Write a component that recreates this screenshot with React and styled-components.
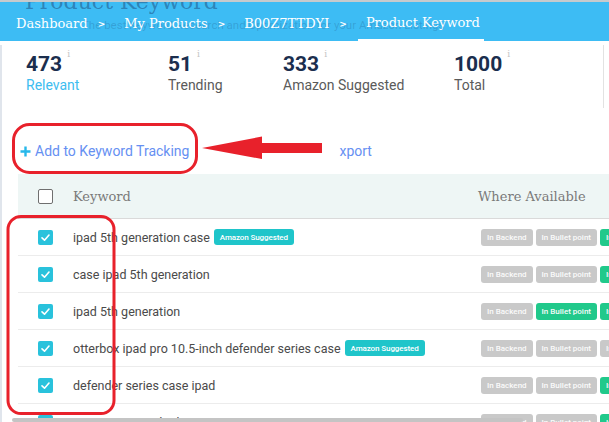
import React from 'react';
import styled, { createGlobalStyle } from 'styled-components';

const Global = createGlobalStyle`
  html, body { margin: 0; padding: 0; background: #fff; overflow: hidden; }
  body { font-family: Roboto, "Noto Sans", Arial, sans-serif; }
`;

const Page = styled.div`
  position: relative;
  width: 609px;
  height: 422px;
  overflow: hidden;
  background: #fff;
`;

const Nav = styled.nav`
  position: relative;
  box-sizing: border-box;
  height: 41px;
  border-top: 2px solid #c6cacd;
  background: #3dbcf4;
  display: flex;
  align-items: stretch;
  padding-left: 16px;
  overflow: hidden;
`;

const GhostTitle = styled.div`
  position: absolute;
  left: 25px;
  top: -11px;
  font-family: "DejaVu Serif", serif;
  font-size: 22px;
  line-height: 22px;
  color: rgba(25, 60, 110, 0.45);
  white-space: nowrap;
  pointer-events: none;
`;

const GhostSub = styled.div`
  position: absolute;
  left: 82px;
  top: 16px;
  font-family: Roboto, sans-serif;
  font-size: 11.5px;
  line-height: 14px;
  color: rgba(25, 60, 110, 0.22);
  white-space: nowrap;
  pointer-events: none;
`;

const Crumb = styled.div`
  position: relative;
  display: flex;
  align-items: center;
  padding-top: 3px;
  font-family: "DejaVu Serif", serif;
  font-size: 13px;
  color: #fff;
  white-space: nowrap;
  box-sizing: border-box;
  ${(p) =>
    p.$active &&
    `
    margin-left: -8px;
    padding-left: 8px;
    padding-right: 4px;
    border-bottom: 2px solid #fff;
  `}
`;

const Sep = styled.div`
  position: relative;
  display: flex;
  align-items: center;
  padding-top: 5px;
  margin: 0 19px 0 10px;
  font-family: "DejaVu Sans", sans-serif;
  font-weight: bold;
  font-size: 9px;
  color: #fff;
`;

const Content = styled.div`
  border-left: 2px solid #e0e5ec;
  height: 381px;
`;

const StatsBar = styled.div`
  display: flex;
  box-sizing: border-box;
  height: 63px;
  margin-top: 4px;
  margin-right: 5px;
  border-right: 1px solid #e2e2e2;
  padding: 6.5px 0 0 24px;
`;

const Stat = styled.div`
  width: ${(p) => p.$w}px;
  flex: none;
`;

const Num = styled.div`
  font-family: Roboto, sans-serif;
  font-weight: 700;
  font-size: 21px;
  line-height: 24px;
  color: #1b2e4e;
`;

const Info = styled.span`
  display: inline-block;
  vertical-align: top;
  margin-left: 5px;
  margin-top: -3px;
  font-size: 9px;
  line-height: 10px;
  font-weight: 400;
  font-family: "DejaVu Serif", serif;
  color: #c4c4c4;
`;

const Label = styled.div`
  margin-top: 1px;
  font-size: 14px;
  line-height: 16px;
  color: ${(p) => (p.$accent ? '#3dbdf0' : '#5a5a5a')};
`;

const ActionRow = styled.div`
  display: flex;
  align-items: flex-start;
  box-sizing: border-box;
  height: 66px;
  padding: 33px 0 0 18px;
`;

const ActionLink = styled.div`
  display: flex;
  align-items: center;
  height: 20px;
  font-size: 14px;
  color: #6690f2;
  margin-left: ${(p) => p.$ml || 0}px;
  white-space: nowrap;
`;

const PlusIcon = styled.svg`
  width: 11px;
  height: 11px;
  margin-right: 4px;
  flex: none;
`;

const TableWrap = styled.div`
  padding-left: 16px;
  overflow: hidden;
`;

const Table = styled.div`
  width: 720px;
`;

const gridCols = `grid-template-columns: 55px 405px 1fr;`;

const HeaderRow = styled.div`
  display: grid;
  ${gridCols}
  align-items: center;
  height: 44px;
  background: #eef6f5;
  border-bottom: 1px solid #dadada;
`;

const HeadText = styled.div`
  font-family: "DejaVu Serif", serif;
  font-size: 13px;
  color: #7a7a7a;
  white-space: nowrap;
`;

const Row = styled.div`
  display: grid;
  ${gridCols}
  align-items: center;
  height: 36px;
  border-bottom: 1px solid #ececec;
`;

const CheckCell = styled.div`
  padding-left: 20px;
  display: flex;
  align-items: center;
`;

const Box = styled.div`
  width: 15px;
  height: 15px;
  box-sizing: border-box;
  border-radius: 2px;
  display: flex;
  align-items: center;
  justify-content: center;
  background: ${(p) => (p.$checked ? '#29c2dc' : '#fff')};
  border: ${(p) => (p.$checked ? 'none' : '1.5px solid #6f6f6f')};
`;

const KeywordCell = styled.div`
  display: flex;
  align-items: center;
  font-size: 12.5px;
  color: #4a4a4a;
  white-space: nowrap;
`;

const Tag = styled.span`
  display: inline-flex;
  align-items: center;
  height: 16px;
  padding: 0 6px;
  margin-left: 4px;
  border-radius: 3px;
  background: #1fc5ca;
  color: #fff;
  font-size: 8px;
  font-weight: 500;
  letter-spacing: -0.1px;
`;

const Badges = styled.div`
  display: flex;
  gap: 3px;
  padding-left: 3px;
`;

const Badge = styled.span`
  display: inline-flex;
  align-items: center;
  height: 17px;
  padding: 0 6px;
  border-radius: 3px;
  background: ${(p) => (p.$on ? '#21c98b' : '#c9c9c9')};
  color: #fbfbfb;
  font-size: 8px;
  font-weight: 500;
  white-space: nowrap;
`;

const Overlay = styled.svg`
  position: absolute;
  left: 0;
  top: 0;
  width: 609px;
  height: 422px;
  pointer-events: none;
`;

const Scrollbar = styled.div`
  position: absolute;
  left: 12px;
  bottom: 0;
  width: 511px;
  height: 4px;
  border-radius: 2px;
  background: #c4c4c4;
`;

const rows = [
  { kw: 'ipad 5th generation case', tag: true, b: [false, false, true] },
  { kw: 'case ipad 5th generation', tag: false, b: [false, false, true] },
  { kw: 'ipad 5th generation', tag: false, b: [false, true, true] },
  { kw: 'otterbox ipad pro 10.5-inch defender series case', tag: true, b: [false, false, false] },
  { kw: 'defender series case ipad', tag: false, b: [false, false, true] },
  { kw: 'smart case ipad 5th', tag: false, b: [false, false, true] },
];

const Check = () => (
  <svg width="11" height="11" viewBox="0 0 11 11">
    <polyline points="2,5.8 4.5,8.2 9,3" fill="none" stroke="#fff" strokeWidth="1.6" strokeLinecap="round" strokeLinejoin="round" />
  </svg>
);

export default function App() {
  return (
    <Page>
      <Global />
      <Nav>
        <GhostTitle>Product Keyword</GhostTitle>
        <GhostSub>The best Keyword Research and Optimization for your Amazon Listings</GhostSub>
        <Crumb>Dashboard</Crumb>
        <Sep>&gt;</Sep>
        <Crumb>My Products</Crumb>
        <Sep>&gt;</Sep>
        <Crumb>B00Z7TTDYI</Crumb>
        <Sep>&gt;</Sep>
        <Crumb $active>Product Keyword</Crumb>
      </Nav>
      <Content>
        <StatsBar>
          <Stat $w={142}>
            <Num>473<Info>i</Info></Num>
            <Label $accent>Relevant</Label>
          </Stat>
          <Stat $w={115}>
            <Num>51<Info>i</Info></Num>
            <Label>Trending</Label>
          </Stat>
          <Stat $w={171}>
            <Num>333<Info>i</Info></Num>
            <Label>Amazon Suggested</Label>
          </Stat>
          <Stat $w={120}>
            <Num>1000<Info>i</Info></Num>
            <Label>Total</Label>
          </Stat>
        </StatsBar>
        <ActionRow>
          <ActionLink>
            <PlusIcon viewBox="0 0 11 11">
              <path d="M5.5 0.5v10M0.5 5.5h10" stroke="#27b8ea" strokeWidth="2.4" />
            </PlusIcon>
            Add to Keyword Tracking
          </ActionLink>
          <ActionLink $ml={150}>xport</ActionLink>
        </ActionRow>
        <TableWrap>
          <Table>
            <HeaderRow>
              <CheckCell><Box /></CheckCell>
              <HeadText>Keyword</HeadText>
              <HeadText>Where Available</HeadText>
            </HeaderRow>
            {rows.map((r, i) => (
              <Row key={i}>
                <CheckCell><Box $checked><Check /></Box></CheckCell>
                <KeywordCell>
                  {r.kw}
                  {r.tag && <Tag>Amazon Suggested</Tag>}
                </KeywordCell>
                <Badges>
                  <Badge $on={r.b[0]}>In Backend</Badge>
                  <Badge $on={r.b[1]}>In Bullet point</Badge>
                  <Badge $on={r.b[2]}>In Title</Badge>
                </Badges>
              </Row>
            ))}
          </Table>
        </TableWrap>
      </Content>
      <Overlay viewBox="0 0 609 422">
        <rect x="13.5" y="124.5" width="183" height="48" rx="16" fill="none" stroke="#e8212b" strokeWidth="3" />
        <polygon points="202,148 262,136.5 262,143 322,143 322,153 262,153 262,159" fill="#e8212b" />
        <rect x="8" y="216.5" width="106" height="197" rx="13" fill="none" stroke="#e8212b" strokeWidth="3" />
      </Overlay>
      <Scrollbar />
    </Page>
  );
}
